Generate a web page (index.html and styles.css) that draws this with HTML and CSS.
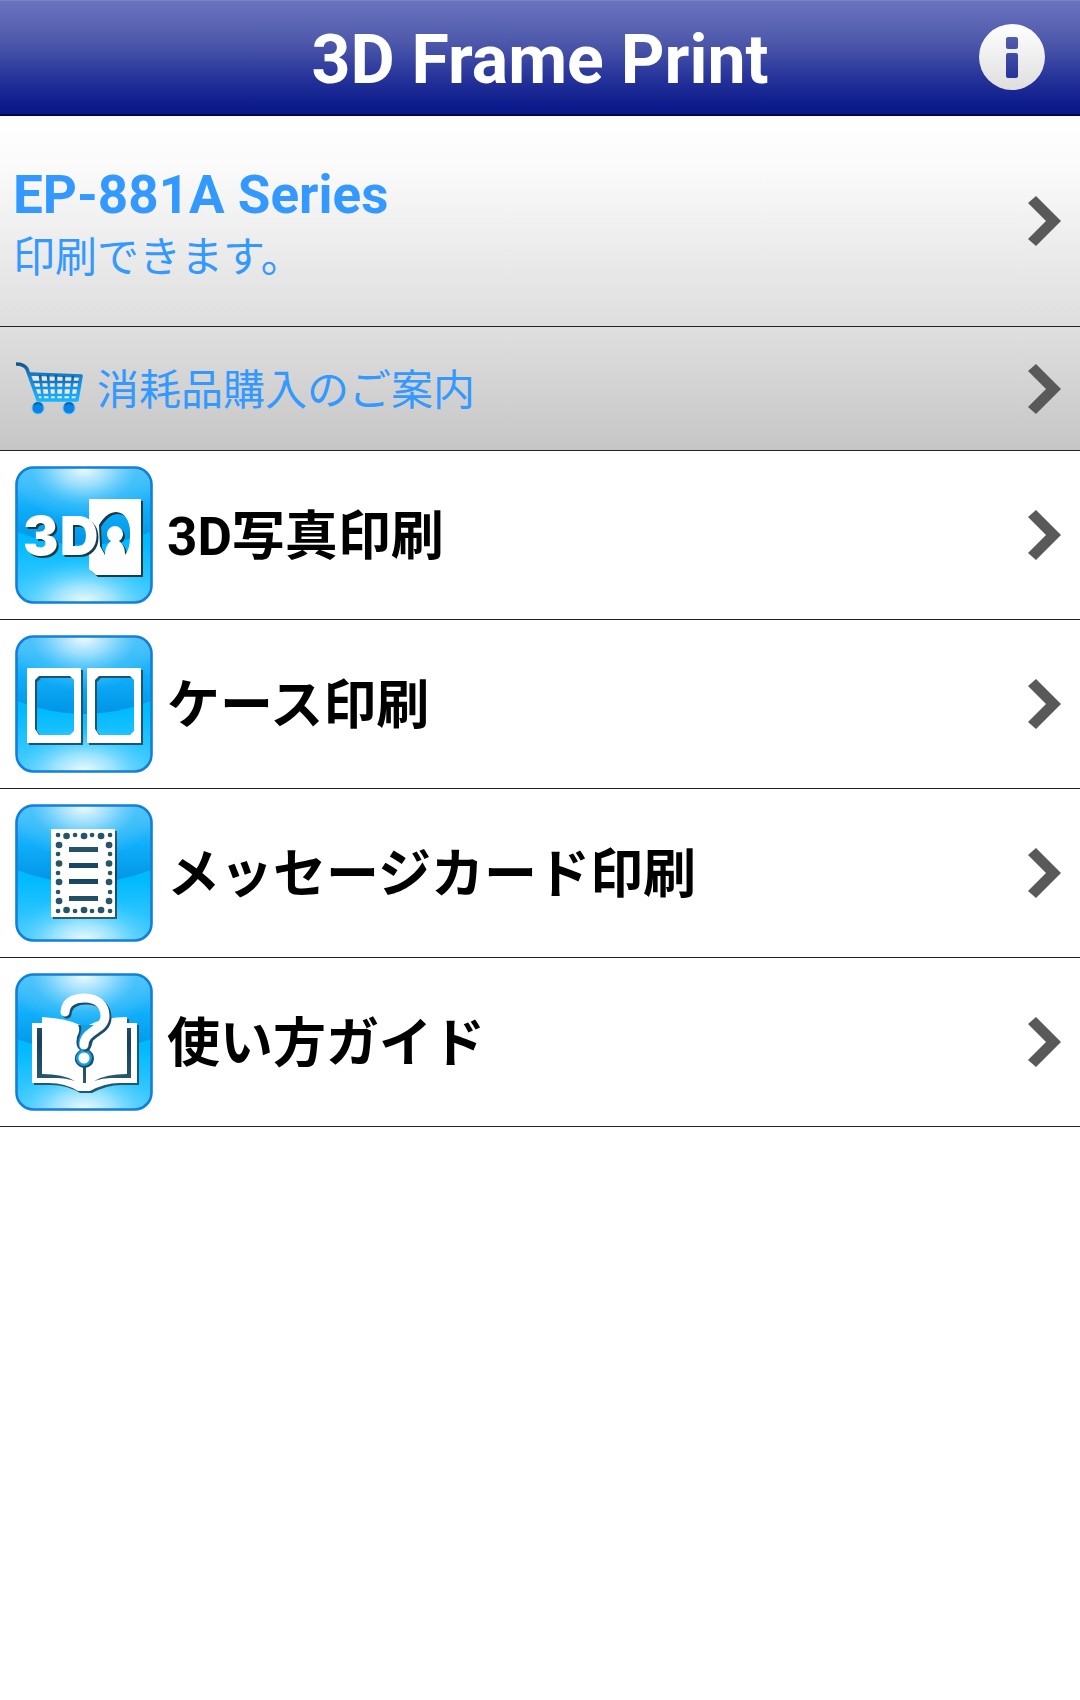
FILE: index.html
```html
<!DOCTYPE html>
<html lang="ja">
<head>
<meta charset="utf-8">
<meta name="viewport" content="width=device-width, initial-scale=1">
<title>3D Frame Print</title>
<link rel="stylesheet" href="styles.css">
</head>
<body>
<svg class="defs" aria-hidden="true">
  <defs>
    <radialGradient id="glow-top" gradientUnits="userSpaceOnUse" cx="69" cy="2" r="76" gradientTransform="translate(69 2) scale(1 .7) translate(-69 -2)">
      <stop offset="0" stop-color="#f2fcff"/><stop offset=".35" stop-color="#a0e0fc" stop-opacity=".9"/><stop offset=".7" stop-color="#45c2fa" stop-opacity=".6"/><stop offset="1" stop-color="#45c2fa" stop-opacity="0"/>
    </radialGradient>
    <radialGradient id="glow-bottom" gradientUnits="userSpaceOnUse" cx="69" cy="137" r="76" gradientTransform="translate(69 137) scale(1 .6) translate(-69 -137)">
      <stop offset="0" stop-color="#f2fcff"/><stop offset=".4" stop-color="#a4e6ff" stop-opacity=".9"/><stop offset="1" stop-color="#3dcbff" stop-opacity="0"/>
    </radialGradient>
    <linearGradient id="upper" x1="0" y1="0" x2="0" y2="1">
      <stop offset="0" stop-color="#5cc8fa"/><stop offset=".5" stop-color="#10aefa"/><stop offset="1" stop-color="#0094e6"/>
    </linearGradient>
    <linearGradient id="lower" x1="0" y1="0" x2="0" y2="1">
      <stop offset=".55" stop-color="#00baff"/><stop offset="1" stop-color="#4accff"/>
    </linearGradient>
    <linearGradient id="ink" gradientUnits="userSpaceOnUse" x1="0" y1="25" x2="0" y2="115">
      <stop offset="0" stop-color="#33606f"/><stop offset=".5" stop-color="#134260"/><stop offset="1" stop-color="#2c5d70"/>
    </linearGradient>
    <linearGradient id="cart-blue" x1="0" y1="0" x2="0" y2="1">
      <stop offset="0" stop-color="#14588c"/><stop offset=".4" stop-color="#1888d8"/><stop offset="1" stop-color="#18b4ff"/>
    </linearGradient>
    <linearGradient id="silver" x1="0" y1="0" x2="0" y2="1">
      <stop offset="0" stop-color="#fff"/><stop offset="1" stop-color="#dedede"/>
    </linearGradient>
    <g id="tile">
      <rect x="2" y="2" width="134" height="134" rx="17" fill="url(#lower)"/>
      <path d="M2 66V19A17 17 0 0 1 19 2H119A17 17 0 0 1 136 19V66Q69 92 2 66Z" fill="url(#upper)"/>
      <rect x="2" y="2" width="134" height="62" rx="17" fill="url(#glow-top)"/>
      <rect x="2" y="80" width="134" height="56" rx="17" fill="url(#glow-bottom)"/>
      <rect x="1.500" y="1.500" width="135" height="135" rx="17" fill="none" stroke="#137fda" stroke-width="2.600"/>
    </g>
    <path id="chevron" d="M8 0L33 25L8 50L0 43L18 25L0 7Z"/>
    <path id="case-frame" fill-rule="evenodd" d="M0 0H54V75H0ZM12 8L8 12V61L12 67H43L47 63V12L43 8Z"/>
    <path id="card-cutout" fill-rule="evenodd" d="M74 33H126V109H81L74 103ZM84 59C90 49 96 46 101 46C110 46 116 56 115 69C115 78 114 84 110 89C110 82 108 78 104 75A8 8 0 1 0 96 75C92 78 90 83 90 89L85 80Z"/>
    <path id="book" d="M17 50H27V44Q50 45 65 52H74Q90 44 112 44V50H122V110H104Q90 110 75 118H63Q50 110 34 110H17Z"/>
    <path id="hook" d="M50 39C51 28 60 25 70 25C82 25 90 32 90 43C90 57 69 57 69 72"/>
  </defs>
</svg>

<header class="bar">
  <h1 class="bar-title">3D Frame Print</h1>
  <button class="info" type="button" aria-label="Info">
    <svg class="info-icon" viewBox="0 0 66 66" aria-hidden="true">
      <path fill="url(#silver)" fill-rule="evenodd" d="M33 0A33 33 0 1 1 33 66A33 33 0 1 1 33 0ZM29 13Q27 13 27 15V23Q27 25 29 25H37Q39 25 39 23V15Q39 13 37 13ZM29 29Q27 29 27 31V52Q27 54 29 54H37Q39 54 39 52V31Q39 29 37 29Z"/>
    </svg>
  </button>
</header>

<main>
  <a class="row printer" href="#printer">
    <span class="row-text">
      <strong class="printer-name">EP-881A Series</strong>
      <span class="printer-state">印刷できます。</span>
    </span>
    <svg class="chevron" viewBox="0 0 33 50" aria-hidden="true"><use href="#chevron"/></svg>
  </a>
  <a class="row supplies" href="#supplies">
    <svg class="cart" viewBox="0 0 68 54" aria-hidden="true">
      <path d="M17 13L66 15L62 37H24Z" fill="#e6e8ea"/>
      <g fill="none" stroke="url(#cart-blue)" stroke-linejoin="round">
        <path stroke-width="3.600" d="M1 2Q9 2 12 7L23 38H62L66 14L15 12"/>
        <path stroke-width="2.600" d="M18 20H64M20 26H63M22 33H62M25 13L28 38M33 13L35 38M41 13V38M49 14L48 38M58 14L55 38"/>
      </g>
      <g fill="#0b82e8" stroke="#55c8ff" stroke-width="1"><circle cx="23" cy="46" r="6"/><circle cx="54" cy="46" r="6"/></g>
      <path d="M19 43Q23 39 27 43M50 43Q54 39 58 43" fill="none" stroke="#15649c" stroke-width="2"/>
    </svg>
    <span class="row-text">消耗品購入のご案内</span>
    <svg class="chevron" viewBox="0 0 33 50" aria-hidden="true"><use href="#chevron"/></svg>
  </a>

  <nav>
    <a class="row item" href="#photo">
      <svg class="icon" viewBox="0 0 138 138" aria-hidden="true">
        <use href="#tile"/>
        <use href="#card-cutout" x="2" y="2" fill="#173c49"/>
        <use href="#card-cutout" fill="#fff"/>
        <text class="icon-text icon-shade" x="10 47" y="91">3D</text>
        <text class="icon-text" x="8 45" y="89">3D</text>
      </svg>
      <span class="row-text">3D写真印刷</span>
      <svg class="chevron" viewBox="0 0 33 50" aria-hidden="true"><use href="#chevron"/></svg>
    </a>
    <a class="row item" href="#case">
      <svg class="icon" viewBox="0 0 138 138" aria-hidden="true">
        <use href="#tile"/>
        <g fill="#1a5671"><use href="#case-frame" x="14" y="35"/><use href="#case-frame" x="74" y="35"/></g>
        <g fill="#fff"><use href="#case-frame" x="12" y="33"/><use href="#case-frame" x="72" y="33"/></g>
      </svg>
      <span class="row-text">ケース印刷</span>
      <svg class="chevron" viewBox="0 0 33 50" aria-hidden="true"><use href="#chevron"/></svg>
    </a>
    <a class="row item" href="#card">
      <svg class="icon" viewBox="0 0 138 138" aria-hidden="true">
        <use href="#tile"/>
        <path d="M38 27H102V115H38Z" fill="url(#ink)"/>
        <path d="M36 25H100V113H36Z" fill="#fff"/>
        <g fill="none" stroke="#275468" stroke-linecap="round">
          <path stroke-width="4.600" d="M43 31h.1M60 31h.1M77 31h.1M95 31h.1M43 50h.1M43 69h.1M43 88h.1M43 107h.1M95 50h.1M95 69h.1M95 88h.1M95 107h.1M60 107h.1M77 107h.1"/>
          <path stroke-width="6.600" d="M51.500 32h.1M69 32h.1M86 32h.1M44 41h.1M44 59.500h.1M44 78h.1M44 97h.1M94 41h.1M94 59.500h.1M94 78h.1M94 97h.1M51.500 106h.1M69 106h.1M86 106h.1"/>
        </g>
        <path fill="url(#ink)" d="M54 43H83V48H54ZM54 59H83V64H54ZM54 75H83V80H54ZM54 92H83V97H54Z"/>
      </svg>
      <span class="row-text">メッセージカード印刷</span>
      <svg class="chevron" viewBox="0 0 33 50" aria-hidden="true"><use href="#chevron"/></svg>
    </a>
    <a class="row item" href="#guide">
      <svg class="icon" viewBox="0 0 138 138" aria-hidden="true">
        <use href="#tile"/>
        <use href="#book" x="2" y="2" fill="#1e5973"/>
        <use href="#book" fill="#fff"/>
        <path fill="url(#ink)" d="M22 55H27V101Q48 101 60 108Q50 105 42 105H22ZM116 55H112V101Q91 101 79 108Q88 105 96 105H116ZM68 93H71V110H68Z"/>
        <path fill="#1a4f6b" d="M63 52Q66 56 62 64Q60 74 65 77Q59 81 60 88Q63 95 70 95Q78 94 79 86Q79 80 74 77Q77 74 78 66L90 54Z"/>
        <path fill="#149fe4" d="M66 52Q67 58 64 65Q62 73 66 77Q61 81 61 86Q63 93 69 93Q76 92 77 85Q77 80 72 77Q76 73 76 66L88 52Z"/>
        <g fill="none" stroke-linecap="round">
          <use href="#hook" stroke="#1a4f6b" stroke-width="9" x="2" y="2"/>
          <use href="#hook" stroke="#fff" stroke-width="9"/>
        </g>
        <circle cx="69" cy="85" r="5.500" fill="#fff"/>
      </svg>
      <span class="row-text">使い方ガイド</span>
      <svg class="chevron" viewBox="0 0 33 50" aria-hidden="true"><use href="#chevron"/></svg>
    </a>
  </nav>
</main>
</body>
</html>
```
FILE: styles.css
```css
* {
  box-sizing: border-box;
}

body {
  margin: 0;
  background: #fff;
  color: #000;
  font-family: Roboto, "Noto Sans CJK JP", sans-serif;
}

.defs {
  position: absolute;
  width: 0;
  height: 0;
}

.bar {
  display: grid;
  grid-template-columns: 1fr auto 1fr;
  align-items: center;
  height: 116px;
  padding: 0 35px 2px;
  border-top: 1px solid #7c84c9;
  border-bottom: 2px solid #02084e;
  background: linear-gradient(#6b74be, #4c57aa 38%, #26339a 68%, #0b1a8b 94%);
}

.bar-title {
  grid-column: 2;
  margin: 0;
  padding-top: 6px;
  color: #fff;
  font-size: 68px;
  font-weight: 700;
  line-height: 80px;
}

.info {
  justify-self: end;
  padding: 0;
  border: 0;
  background: none;
}

.info-icon {
  display: block;
  width: 66px;
  height: 66px;
}

.row {
  display: flex;
  align-items: center;
  gap: 14px;
  padding: 15px 19px 15px 15px;
  border-bottom: 1px solid #222;
  color: inherit;
  text-decoration: none;
}

.row-text {
  flex: 1;
  padding-top: 4px;
}

.chevron {
  width: 33px;
  height: 50px;
  fill: #595959;
}

.printer {
  height: 211px;
  padding-left: 13px;
  background: linear-gradient(#fff, #fafafa 25%, #dedede);
  color: #3399ff;
}

.printer-name,
.printer-state {
  display: block;
}

.printer-name {
  padding-top: 8px;
  font-size: 53px;
  line-height: 62px;
}

.printer-state {
  font-size: 42px;
  line-height: 64px;
}

.supplies {
  height: 124px;
  background: linear-gradient(#dfdfdf, #c6c6c6);
  color: #3399ff;
  font-size: 42px;
  line-height: 62px;
}

.cart {
  width: 68px;
  height: 54px;
}

.item {
  font-size: 53px;
  font-weight: 700;
  line-height: 62px;
}

.icon {
  width: 138px;
  height: 138px;
}

.icon-text {
  fill: #fff;
  font-family: Inter, sans-serif;
  font-size: 53px;
  font-weight: 900;
}

.icon-shade {
  fill: #173c49;
}
```
